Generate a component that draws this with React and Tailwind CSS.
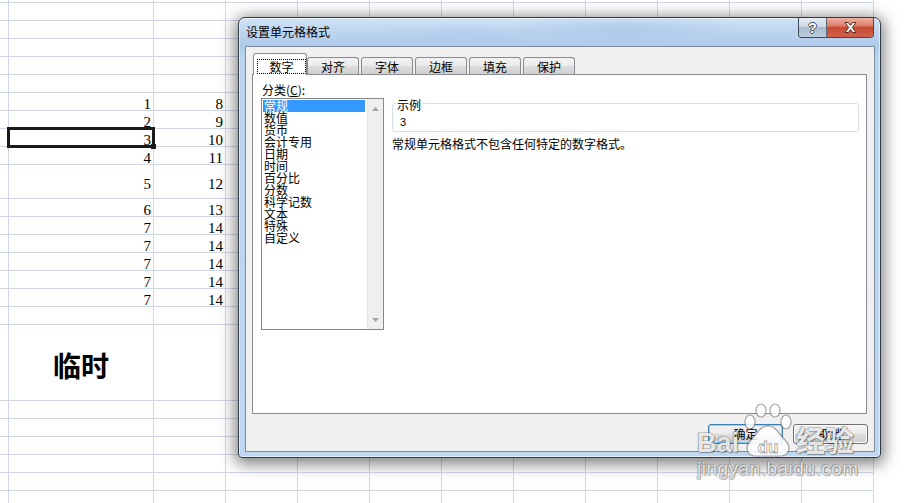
import React from "react";

const GRID = "shrink-0 border-r border-b border-[#d0d7e5]";
const COLS = [
  "w-[9px]",
  "w-[145px]",
  "w-[72px]",
  "w-[72px]",
  "w-[72px]",
  "w-[72px]",
  "w-[72px]",
  "w-[72px]",
  "w-[72px]",
  "w-[72px]",
  "w-[72px]",
  "w-[72px]",
];
const H = { 3: "h-[3px]", 18: "h-[18px]", 34: "h-[34px]", 76: "h-[76px]" };

const seven = { h: 18, a: "7", b: "14" };
const ROWS = [
  { h: 3 },
  { h: 18 },
  { h: 18 },
  { h: 18 },
  { h: 18 },
  { h: 18 },
  { h: 18, a: "1", b: "8" },
  { h: 18, a: "2", b: "9" },
  { h: 18, a: "3", b: "10" },
  { h: 18, a: "4", b: "11" },
  { h: 34, a: "5", b: "12" },
  { h: 18, a: "6", b: "13" },
  seven,
  seven,
  seven,
  seven,
  seven,
  { h: 18 },
  { h: 76, label: "临时" },
  { h: 18 },
  { h: 18 },
  { h: 18 },
  { h: 18 },
  { h: 18 },
  { h: 18 },
];

function Num({ v, tall }) {
  return (
    <div
      className={
        "flex h-full justify-end items-start pr-[2px] text-[15px] leading-[17px] text-black font-['Liberation_Serif',serif] " +
        (tall ? "pt-[11px]" : "pt-[3px]")
      }
    >
      {v}
    </div>
  );
}

function Sheet() {
  return (
    <div className="flex flex-col">
      {ROWS.map((r, i) => (
        <div key={i} className={"flex " + H[r.h]}>
          {COLS.map((c, j) => (
            <div key={j} className={GRID + " " + c + " h-full"}>
              {j === 1 && r.a ? <Num v={r.a} tall={r.h === 34} /> : null}
              {j === 2 && r.b ? <Num v={r.b} tall={r.h === 34} /> : null}
              {j === 1 && r.label ? (
                <div className="flex h-full items-center justify-center pt-[5px] text-[28px] leading-[28px] font-bold text-black font-['Noto_Sans_CJK_SC',sans-serif]">
                  {r.label}
                </div>
              ) : null}
            </div>
          ))}
        </div>
      ))}
    </div>
  );
}

function Tab({ label }) {
  return (
    <div className="ml-0 mt-[4px] h-[17px] w-[52px] shrink-0 flex items-center justify-center pt-[2px] rounded-t-[3px] border border-b-0 border-[#898c95] bg-[linear-gradient(180deg,#f2f2f2_0%,#ebebeb_50%,#dddddd_51%,#cfcfcf_100%)] text-[12px] leading-[14px]">
      {label}
    </div>
  );
}

const ITEMS = [
  "常规",
  "数值",
  "货币",
  "会计专用",
  "日期",
  "时间",
  "百分比",
  "分数",
  "科学记数",
  "文本",
  "特殊",
  "自定义",
];

function WinButton({ label, def }) {
  return (
    <div
      className={
        "w-[75px] h-[20px] flex items-center justify-center rounded-[3px] border text-[12px] leading-[14px] text-black bg-[linear-gradient(180deg,#f2f2f2_0%,#ebebeb_50%,#dddddd_51%,#cfcfcf_100%)] " +
        (def
          ? "border-[#3c7fb1] shadow-[inset_0_0_0_1px_#8fd1f7]"
          : "border-[#707070] shadow-[inset_0_0_0_1px_#fcfcfc]")
      }
    >
      {label}
    </div>
  );
}

function Dialog() {
  return (
    <div className="absolute left-[238px] top-[17px] w-[643px] h-[441px] flex flex-col rounded-t-[7px] rounded-b-[4px] border border-[#323a44] bg-[linear-gradient(180deg,#d0e3f7_0px,#bcd4ee_14px,#aecbea_28px,#bad4ef_40px,#bfd7f0_100%)] shadow-[0_3px_15px_3px_rgba(0,0,0,0.5),inset_0_0_0_1px_rgba(255,255,255,0.55)] pl-[6px] pr-[5px] pb-[5px] font-['Noto_Sans_CJK_SC',sans-serif] text-black">
      {/* title bar */}
      <div className="h-[28px] shrink-0 flex items-start bg-[radial-gradient(ellipse_120px_14px_at_60%_40%,rgba(160,195,230,0.55),transparent),radial-gradient(ellipse_90px_12px_at_35%_60%,rgba(170,200,235,0.45),transparent)]">
        <div className="flex-1 pt-[7px] pl-[1px] text-[12px] leading-[14px] text-black">
          设置单元格格式
        </div>
        <div className="mr-[1px] flex h-[20px] overflow-hidden rounded-b-[4px] border border-t-0 border-[#3d4754]">
          <div className="w-[28px] h-full flex items-center justify-center border-r border-[#5b6878] bg-[linear-gradient(180deg,#e6eef6_0%,#cbd8e5_45%,#a9bdd1_50%,#bccddd_100%)]">
            <span className="text-[14px] leading-[14px] font-bold text-white font-['Liberation_Sans',sans-serif] [text-shadow:1px_0_0_#3b4a5a,-1px_0_0_#3b4a5a,0_1px_0_#3b4a5a,0_-1px_0_#3b4a5a]">
              ?
            </span>
          </div>
          <div className="w-[46px] h-full flex items-center justify-center bg-[linear-gradient(180deg,#eeb2a4_0%,#dc7c68_42%,#c84a33_50%,#d0604a_100%)]">
            <svg width="13" height="11" viewBox="0 0 13 11">
              <path
                d="M1 0.5 L4.3 0.5 L6.5 3.4 L8.7 0.5 L12 0.5 L8.3 5.5 L12 10.5 L8.7 10.5 L6.5 7.6 L4.3 10.5 L1 10.5 L4.7 5.5 Z"
                fill="#ffffff"
                stroke="#4a1d14"
                strokeWidth="0.9"
              />
            </svg>
          </div>
        </div>
      </div>

      {/* client area */}
      <div className="flex-1 flex flex-col border border-[#7d8d9e] bg-[#f0f0f0] pt-[6px] pl-[6px] pr-[7px]">
        {/* tabs */}
        <div className="relative z-10 flex h-[21px] ml-[1px] items-start">
          <div className="h-[22px] w-[54px] shrink-0 flex flex-col rounded-t-[3px] border border-b-0 border-[#898c95] bg-white pt-[5px] pl-[3px]">
            <div className="h-[15px] flex items-center justify-center border border-dotted border-black text-[12px] leading-[14px]">
              数字
            </div>
          </div>
          <Tab label="对齐" />
          <div className="w-[2px] shrink-0" />
          <Tab label="字体" />
          <div className="w-[2px] shrink-0" />
          <Tab label="边框" />
          <div className="w-[2px] shrink-0" />
          <Tab label="填充" />
          <div className="w-[2px] shrink-0" />
          <Tab label="保护" />
        </div>

        {/* tab panel */}
        <div className="h-[340px] border border-[#898c95] bg-white flex pl-[8px]">
          <div className="flex flex-col pt-[8px]">
            <div className="h-[15px] pl-[1px] text-[12px] leading-[14px]">
              分类(<span className="underline">C</span>):
            </div>
            <div className="w-[123px] h-[232px] border border-[#828790] flex bg-white">
              <div className="flex-1 flex flex-col pl-[1px] pt-[1px] pr-[2px]">
                {ITEMS.map((it, i) => (
                  <div
                    key={it}
                    className={
                      "h-[12px] pl-[1px] text-[12px] leading-[12px] whitespace-nowrap " +
                      (i === 0 ? "bg-[#3399ff] text-white" : "text-black")
                    }
                  >
                    {it}
                  </div>
                ))}
              </div>
              <div className="w-[16px] shrink-0 flex flex-col items-center justify-between pt-[8px] pb-[7px] bg-[#efefef] border-l border-[#e6e6e6]">
                <svg width="7" height="4" viewBox="0 0 7 4">
                  <path d="M0 4 L3.5 0 L7 4 Z" fill="#a3a3a3" />
                </svg>
                <svg width="7" height="4" viewBox="0 0 7 4">
                  <path d="M0 0 L7 0 L3.5 4 Z" fill="#a3a3a3" />
                </svg>
              </div>
            </div>
          </div>

          <div className="ml-[8px] pt-[28px] flex flex-col">
            <div className="relative w-[467px] h-[29px] border border-[#d5dfe5] rounded-[3px]">
              <div className="absolute left-[3px] top-[-6px] bg-white px-[1px] text-[12px] leading-[14px]">
                示例
              </div>
              <div className="pt-[11px] pl-[7px] text-[11px] leading-[14px] font-['Liberation_Sans',sans-serif]">
                3
              </div>
            </div>
            <div className="mt-[5px] text-[12px] leading-[14px] whitespace-nowrap">
              常规单元格格式不包含任何特定的数字格式。
            </div>
          </div>
        </div>

        {/* buttons */}
        <div className="mt-[10px] -mr-[1px] flex justify-end gap-[10px]">
          <WinButton label="确定" def />
          <WinButton label="取消" />
        </div>
      </div>
    </div>
  );
}

const WM =
  "text-[rgba(255,255,255,0.88)] [text-shadow:0_0_1px_rgba(0,0,0,0.6),1px_1px_1px_rgba(0,0,0,0.3),-1px_-1px_1px_rgba(0,0,0,0.15)]";

function Watermark() {
  return (
    <>
      <div className="absolute left-[697px] top-[402px] h-[55px] flex items-end pointer-events-none">
        <div
          className={
            "text-[27px] leading-[27px] font-bold font-['Liberation_Sans',sans-serif] " +
            WM
          }
        >
          Bai
        </div>
        <svg
          className="ml-[3px]"
          width="52"
          height="54"
          viewBox="0 0 52 54"
        >
          <g
            fill="rgba(255,255,255,0.85)"
            stroke="rgba(0,0,0,0.35)"
            strokeWidth="1.2"
          >
            <ellipse cx="8" cy="19" rx="5" ry="7" />
            <ellipse cx="19" cy="7.5" rx="5" ry="6.5" />
            <ellipse cx="33" cy="7.5" rx="5" ry="6.5" />
            <ellipse cx="44" cy="19" rx="5" ry="7" />
            <path d="M26 23 C18 23 15 31 9 37 C2 44 5 53 14 53 L38 53 C47 53 50 44 43 37 C37 31 34 23 26 23 Z" />
          </g>
          <text
            x="26"
            y="50"
            textAnchor="middle"
            fontSize="17"
            fontWeight="bold"
            fontFamily="Liberation Sans, sans-serif"
            fill="rgba(255,255,255,0.95)"
            stroke="rgba(0,0,0,0.4)"
            strokeWidth="0.8"
          >
            du
          </text>
        </svg>
        <div
          className={
            "ml-[2px] mb-[3px] text-[29px] leading-[29px] font-bold font-['Noto_Sans_CJK_SC',sans-serif] " +
            WM
          }
        >
          经验
        </div>
      </div>
      <div
        className={
          "absolute left-[697px] top-[458px] text-[19px] leading-[22px] tracking-[0.5px] font-['Liberation_Sans',sans-serif] pointer-events-none " +
          WM
        }
      >
        jingyan.baidu.com
      </div>
    </>
  );
}

export default function App() {
  return (
    <div className="relative w-[909px] h-[503px] overflow-hidden bg-white">
      <Sheet />
      {/* selection */}
      <div className="absolute left-[7px] top-[127px] w-[148px] h-[21px] border-[3px] border-[#1c1a16]" />
      <div className="absolute left-[151px] top-[144px] w-[5px] h-[5px] bg-[#1c1a16]" />
      <Dialog />
      <Watermark />
    </div>
  );
}
